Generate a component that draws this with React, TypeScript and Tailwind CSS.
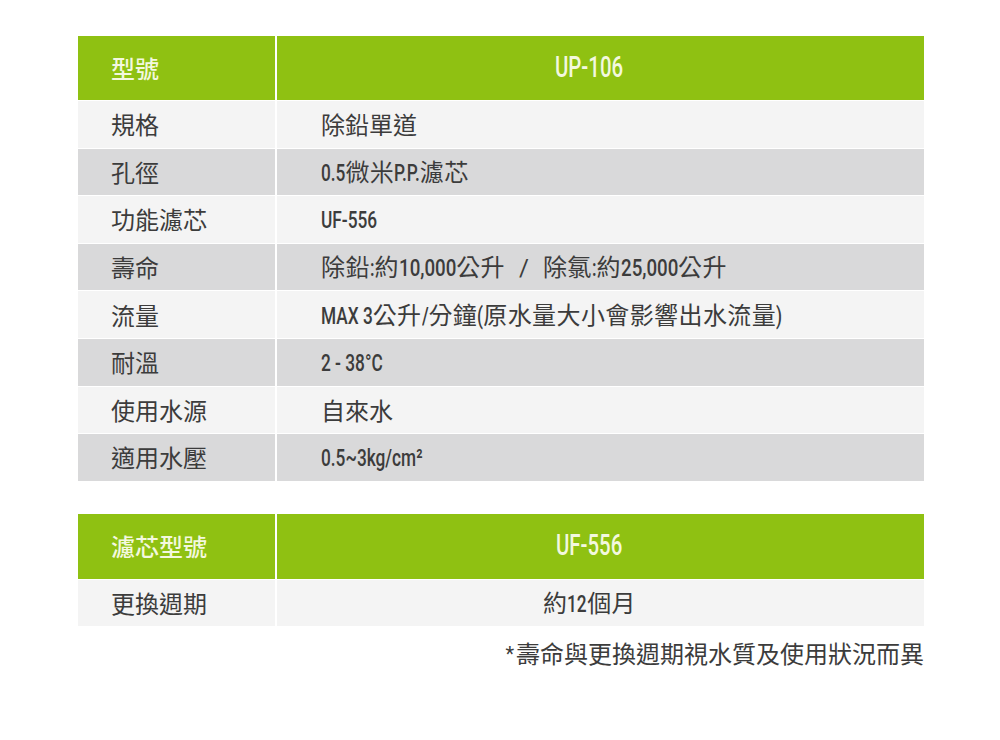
import { useLayoutEffect, useRef, useState } from 'react'

const CJK_FONT = "'Noto Sans CJK TC', 'Noto Sans CJK SC', sans-serif"
const LATIN_FONT = "Roboto, 'Noto Sans', sans-serif"

// Specs table for the UP-106 unit. No condensed face is installed,
// so Latin runs are squeezed with scaleX and the box is shrunk to match.
// A "|" in a value renders as the spaced slash separator.
const specs: { label: string; value: string; mixed?: boolean }[] = [
  { label: '規格', value: '除鉛單道' },
  { label: '孔徑', value: '0.5微米P.P.濾芯', mixed: true },
  { label: '功能濾芯', value: 'UF-556', mixed: true },
  { label: '壽命', value: '除鉛:約10,000公升|除氯:約25,000公升', mixed: true },
  { label: '流量', value: 'MAX 3公升/分鐘(原水量大小會影響出水流量)', mixed: true },
  { label: '耐溫', value: '2 - 38°C', mixed: true },
  { label: '使用水源', value: '自來水' },
  { label: '適用水壓', value: '0.5~3kg/cm²', mixed: true },
]

const CJK_RE = /[\u3000-\u9fff\uff00-\uffef]/
const SPLIT_RE = /\||[\u3000-\u9fff\uff00-\uffef]+|[^|\u3000-\u9fff\uff00-\uffef]+/g

function Narrow({
  text,
  scale,
  className,
}: {
  text: string
  scale: number
  className: string
}) {
  const ref = useRef<HTMLSpanElement>(null)
  const [w, setW] = useState(0)
  useLayoutEffect(() => {
    if (ref.current) setW(ref.current.offsetWidth)
  }, [text])
  return (
    <span
      ref={ref}
      className={`inline-block origin-left whitespace-pre ${className}`}
      style={{
        fontFamily: LATIN_FONT,
        transform: `scaleX(${scale})`,
        marginRight: -w * (1 - scale),
      }}
    >
      {text}
    </span>
  )
}

function MixedText({ text }: { text: string }) {
  const parts = text.match(SPLIT_RE) ?? []
  return (
    <span className="whitespace-nowrap">
      {parts.map((p, i) => {
        if (p === '|')
          return (
            <span key={i} className="mx-[14px] text-[24px]" style={{ fontFamily: LATIN_FONT }}>
              /
            </span>
          )
        if (CJK_RE.test(p))
          return (
            <span
              key={i}
              className="text-[24px] tracking-[0.4px]"
              style={{ fontFamily: CJK_FONT }}
            >
              {p}
            </span>
          )
        return (
          <Narrow
            key={i}
            text={p}
            scale={p.includes(',') ? 0.78 : 0.72}
            className="text-[24px] font-medium"
          />
        )
      })}
    </span>
  )
}

function HeaderRow({ label, value, h }: { label: string; value: string; h: string }) {
  return (
    <>
      <div
        className={`flex ${h} items-center bg-[#8fc112] pl-[33px] text-[24px] font-medium text-[#f3f8df]`}
        style={{ fontFamily: CJK_FONT }}
      >
        {label}
      </div>
      <div
        className={`flex ${h} items-center justify-center bg-[#8fc112] pb-[4px] pr-[22px] text-[#f3f8df]`}
      >
        <Narrow text={value} scale={0.68} className="text-[30px] font-medium" />
      </div>
    </>
  )
}

export default function App() {
  return (
    <div className="min-h-[740px] w-[1000px] bg-white text-[#3c3c3c]">
      <div className="ml-[78px] w-[846px] pt-[36px]">
        <div className="grid grid-cols-[197px_1fr] gap-x-[2px] gap-y-[1px] bg-white">
          <HeaderRow label="型號" value="UP-106" h="h-[64px]" />
          {specs.map((row, i) => {
            const bg = i % 2 === 0 ? 'bg-[#f4f4f4]' : 'bg-[#d9d9da]'
            return (
              <div key={row.label} className="contents">
                <div
                  className={`flex h-[46.6px] items-center pl-[33px] text-[24px] ${bg}`}
                  style={{ fontFamily: CJK_FONT }}
                >
                  {row.label}
                </div>
                <div
                  className={`flex h-[46.6px] items-center pl-[44px] text-[24px] ${bg}`}
                  style={{ fontFamily: CJK_FONT }}
                >
                  {row.mixed ? <MixedText text={row.value} /> : row.value}
                </div>
              </div>
            )
          })}
        </div>

        <div className="mt-[33px] grid grid-cols-[197px_1fr] gap-x-[2px] gap-y-[1px] bg-white">
          <HeaderRow label="濾芯型號" value="UF-556" h="h-[65px]" />
          <div
            className="flex h-[46px] items-center bg-[#f4f4f4] pl-[33px] text-[24px]"
            style={{ fontFamily: CJK_FONT }}
          >
            更換週期
          </div>
          <div className="flex h-[46px] items-center justify-center bg-[#f4f4f4] pr-[22px]">
            <MixedText text="約12個月" />
          </div>
        </div>

        <p
          className="mt-[12px] text-right text-[24px] leading-[30px]"
          style={{ fontFamily: CJK_FONT }}
        >
          <span className="relative -top-[2px] mr-[2px] text-[20px]" style={{ fontFamily: LATIN_FONT }}>
            *
          </span>
          壽命與更換週期視水質及使用狀況而異
        </p>
      </div>
    </div>
  )
}
